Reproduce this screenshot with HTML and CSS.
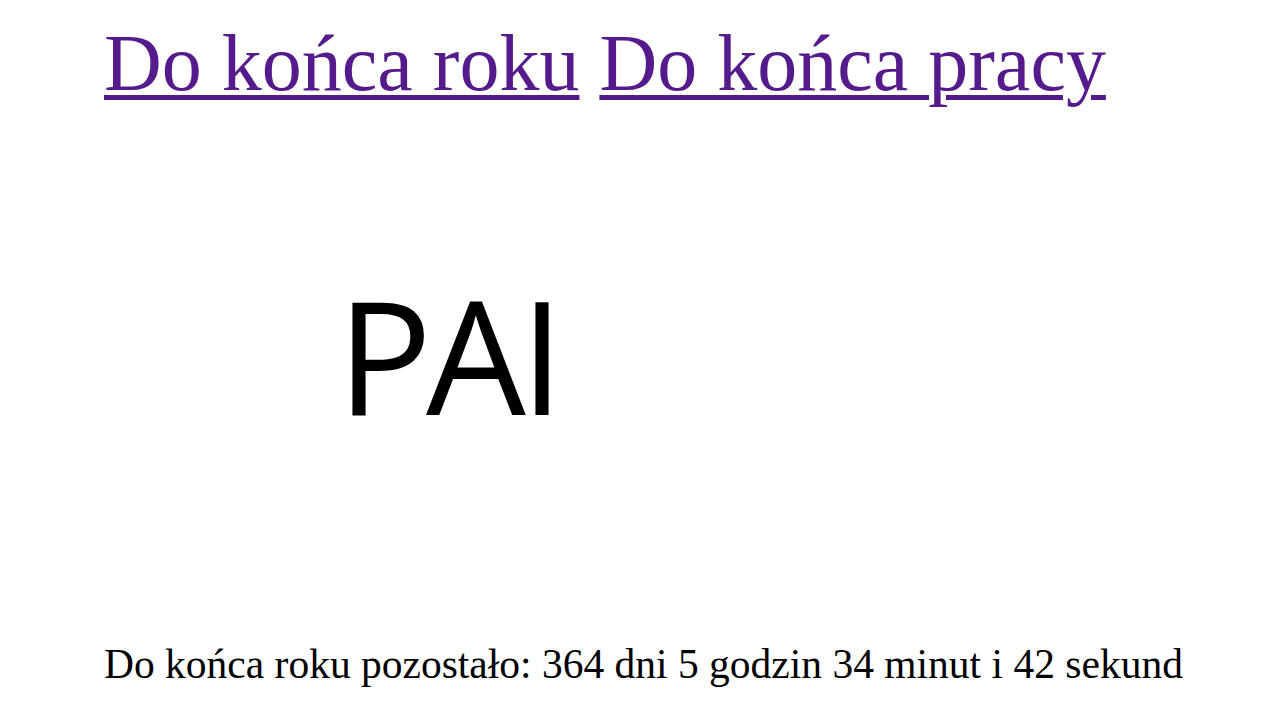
FILE: index.html
```html
<!DOCTYPE html>
<html lang="pl">
<head>
<meta charset="utf-8">
<title>PAI</title>
<link rel="stylesheet" href="styles.css">
</head>
<body>
<div class="slide">
  <nav class="links"><a href="#rok" class="link">Do końca roku</a> <a href="#praca" class="link">Do końca pracy</a></nav>
  <h1 class="title">PAI</h1>
  <p class="countdown">Do końca roku pozostało: 364 dni 5 godzin 34 minut i 42 sekund</p>
</div>
</body>
</html>
```

FILE: styles.css
```css
html, body {
  margin: 0;
  padding: 0;
  background: #ffffff;
}

.slide {
  width: 1280px;
  height: 720px;
  overflow: hidden;
  display: flex;
  flex-direction: column;
  align-items: flex-start;
}

.links {
  font-family: "Liberation Serif", "Times New Roman", serif;
  font-size: 80px;
  line-height: 92px;
  padding: 17px 0 0 104px;
  white-space: nowrap;
}

.link {
  color: #551a8b;
  text-decoration: underline;
  text-decoration-thickness: 5px;
  text-underline-offset: 5px;
}

.title {
  font-family: "Open Sans", "Noto Sans", sans-serif;
  font-weight: 400;
  font-size: 158px;
  line-height: 158px;
  letter-spacing: -6px;
  margin: 166px 0 0 337px;
  color: #000000;
}

.countdown {
  font-family: "Liberation Serif", "Times New Roman", serif;
  font-size: 41.5px;
  line-height: 48px;
  margin: 207px 0 0 104px;
  color: #000000;
  white-space: nowrap;
}
```
